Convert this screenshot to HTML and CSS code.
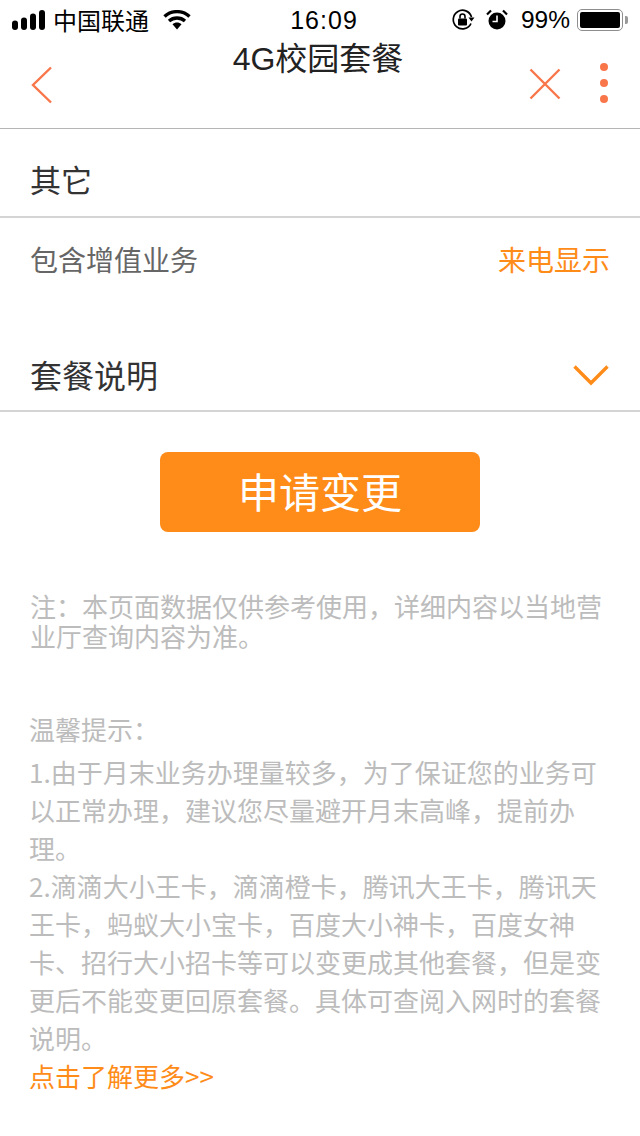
FILE: index.html
```html
<!DOCTYPE html>
<html lang="zh">
<head>
    <meta charset="UTF-8">
    <meta name="viewport" content="width=device-width, initial-scale=1.0">
    <title>4G校园套餐</title>
    <link rel="stylesheet" href="styles.css">
</head>
<body>

    <!-- 状态栏 -->
    <div class="status-bar">
        <div class="status-left">
            <svg class="signal" width="34" height="20" viewBox="0 0 34 20">
                <rect x="0" y="10.500" width="6" height="9.500" rx="3" fill="#000"/>
                <rect x="9" y="7.500" width="6" height="12.500" rx="3" fill="#000"/>
                <rect x="18" y="3.500" width="6" height="16.500" rx="3" fill="#000"/>
                <rect x="27" y="0" width="6" height="20" rx="3" fill="#000"/>
            </svg>
            <span class="carrier">中国联通</span>
            <svg class="wifi" width="28" height="20" viewBox="0 0 28 20">
                <path d="M1.500 6.500C8.500 0 19.500 0 26.500 6.500" fill="none" stroke="#000" stroke-width="3.400"/>
                <path d="M6 11C10.500 7 17.500 7 22 11" fill="none" stroke="#000" stroke-width="3.400"/>
                <path d="M9.500 14.200C12 12 16 12 18.500 14.200L14 19.500Z" fill="#000"/>
            </svg>
        </div>
        <div class="status-time">16:09</div>
        <div class="status-right">
            <svg width="24" height="24" viewBox="0 0 24 24">
                <path d="M20 15.500A9.300 9.300 0 1 1 20.500 9" fill="none" stroke="#000" stroke-width="1.700"/>
                <path d="M17.500 9.500H23.500L20.500 13.500Z" fill="#000"/>
                <rect x="7" y="10.500" width="9" height="7" rx="1" fill="#000"/>
                <path d="M9 10.500V8.500A2.500 2.500 0 0 1 14 8.500V10.500" fill="none" stroke="#000" stroke-width="1.600"/>
            </svg>
            <svg class="alarm" width="22" height="24" viewBox="0 0 22 24">
                <circle cx="11" cy="13" r="8.500" fill="#000"/>
                <path d="M11 7.500V13.500H6.500" fill="none" stroke="#fff" stroke-width="1.600"/>
                <path d="M1 6.500L5 2.500M21 6.500L17 2.500" stroke="#000" stroke-width="2.200"/>
            </svg>
            <span class="battery-text">99%</span>
            <div class="battery">
                <div class="battery-fill"></div>
            </div>
            <div class="battery-cap"></div>
        </div>
    </div>

    <!-- 导航栏 -->
    <div class="nav-bar">
        <svg class="nav-back" width="24" height="40" viewBox="0 0 24 40">
            <path d="M21 2.500L3 20L21 37.500" fill="none" stroke="#f8764a" stroke-width="2.400"/>
        </svg>
        <div class="nav-title">4G校园套餐</div>
        <div class="nav-actions">
            <svg width="34" height="34" viewBox="0 0 34 34">
                <path d="M2.500 2.500L31.500 31.500M31.500 2.500L2.500 31.500" fill="none" stroke="#f8764a" stroke-width="2.400"/>
            </svg>
            <div class="nav-more">
                <span class="dot"></span>
                <span class="dot"></span>
                <span class="dot"></span>
            </div>
        </div>
    </div>

    <!-- 套餐信息 -->
    <div class="row row-other">其它</div>

    <div class="row-service">
        <span class="service-label">包含增值业务</span>
        <span class="service-value">来电显示</span>
    </div>

    <div class="row row-desc">
        <span>套餐说明</span>
        <svg width="38" height="24" viewBox="0 0 38 24">
            <path d="M2.500 4.500L19 21L35.500 4.500" fill="none" stroke="#ff8c19" stroke-width="3.400"/>
        </svg>
    </div>

    <button class="apply-button">申请变更</button>

    <p class="note">注：本页面数据仅供参考使用，详细内容以当地营业厅查询内容为准。</p>

    <div class="tips">
        <p class="tips-title">温馨提示：</p>
        <p>1.由于月末业务办理量较多，为了保证您的业务可以正常办理，建议您尽量避开月末高峰，提前办理。</p>
        <p>2.滴滴大小王卡，滴滴橙卡，腾讯大王卡，腾讯天王卡，蚂蚁大小宝卡，百度大小神卡，百度女神卡、招行大小招卡等可以变更成其他套餐，但是变更后不能变更回原套餐。具体可查阅入网时的套餐说明。</p>
        <a class="more-link">点击了解更多&gt;&gt;</a>
    </div>

</body>
</html>
```

FILE: styles.css
```css
/* 全局 */
body {
    margin: 0;
    background-color: #fff;
    font-family: "Noto Sans CJK SC", "Liberation Sans", sans-serif;
    color: #333;
}

p {
    margin: 0;
}

/* 状态栏 */
.status-bar {
    height: 40px;
    display: grid;
    grid-template-columns: 1fr auto 1fr;
    align-items: center;
    padding: 0 12px;
    box-sizing: border-box;
    color: #000;
}

.status-left,
.status-right {
    display: flex;
    align-items: center;
}

.status-right {
    justify-content: flex-end;
}

.carrier {
    margin-left: 7px;
    font-size: 24px;
    line-height: 40px;
}

.wifi {
    margin-left: 14px;
}

.status-time {
    padding-left: 8px;
    font-family: "Liberation Sans", sans-serif;
    font-size: 25px;
    letter-spacing: 1px;
}

.alarm {
    margin-left: 11px;
}

.battery-text {
    margin-left: 13px;
    font-family: "Liberation Sans", sans-serif;
    font-size: 24.5px;
}

.battery {
    margin-left: 7px;
    width: 46px;
    height: 22px;
    padding: 2px;
    box-sizing: border-box;
    border: 1.5px solid #8e8e8e;
    border-radius: 5px;
}

.battery-fill {
    height: 100%;
    background-color: #000;
    border-radius: 2px;
}

.battery-cap {
    margin-left: 2px;
    width: 3px;
    height: 8px;
    background-color: #999;
    border-radius: 0 2px 2px 0;
}

/* 导航栏 */
.nav-bar {
    height: 88px;
    display: flex;
    justify-content: space-between;
    padding: 0 30px;
    border-bottom: 1px solid #b5b5b5;
    position: relative;
}

.nav-back {
    margin-top: 25px;
}

.nav-title {
    position: absolute;
    top: -3px;
    left: 0;
    right: 4px;
    text-align: center;
    font-family: "Liberation Sans", "Noto Sans CJK SC", sans-serif;
    font-size: 32px;
    line-height: 44px;
    color: #222;
}

.nav-actions {
    display: flex;
    gap: 38px;
    align-items: flex-start;
}

.nav-actions svg {
    margin-top: 27px;
}

.nav-more {
    margin-top: 23px;
    width: 10px;
    display: flex;
    flex-direction: column;
    gap: 8px;
}

.dot {
    width: 8px;
    height: 8px;
    border-radius: 50%;
    background-color: #f8764a;
}

/* 信息行 */
.row {
    display: flex;
    justify-content: space-between;
    align-items: center;
    padding: 0 30px;
    border-bottom: 2px solid #d4d4d4;
    box-sizing: border-box;
    color: #333;
}

.row-other {
    height: 89px;
    padding-top: 11px;
    font-size: 31px;
}

.row-service {
    height: 123px;
    box-sizing: border-box;
    padding: 20px 30px 0 30px;
    display: flex;
    justify-content: space-between;
    align-items: flex-start;
    font-size: 28px;
    line-height: 42px;
}

.service-label {
    color: #666;
}

.service-value {
    color: #ff8c19;
}

.row-desc {
    height: 71px;
    padding-bottom: 3px;
    font-size: 32px;
}

/* 按钮 */
.apply-button {
    display: block;
    width: 320px;
    height: 80px;
    margin: 40px auto 0;
    padding: 0 0 5px;
    border: none;
    border-radius: 8px;
    background-color: #ff8c19;
    color: #fff;
    font-family: inherit;
    font-size: 41px;
}

/* 说明文字 */
.note {
    margin: 59px 30px 0;
    font-size: 26px;
    line-height: 30px;
    color: #bcbcbc;
}

.tips {
    margin: 60px 29px 0;
    font-size: 26px;
    line-height: 38px;
    color: #bcbcbc;
}

.tips-title {
    line-height: 36px;
    margin-bottom: 6px;
}

.more-link {
    display: block;
    color: #ff8c19;
}
```
